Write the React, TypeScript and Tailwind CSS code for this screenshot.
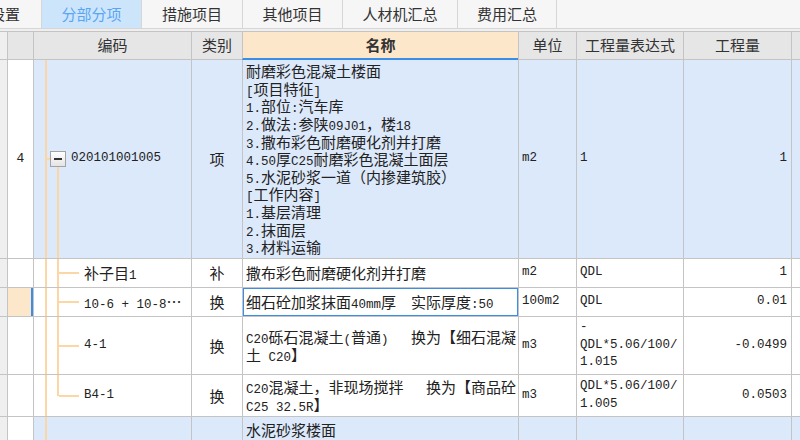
import React from 'react';

// Mixed CJK / half-width text: ASCII runs get the narrow mono font
function Mixed({ s }: { s: string }) {
  const parts = s.split(/([\x20-\x7e]+)/).filter((p) => p !== '');
  return (
    <>
      {parts.map((p, i) =>
        /^[\x20-\x7e]+$/.test(p) ? (
          <span key={i} className="font-['Liberation_Mono'] text-[12.5px] whitespace-pre">
            {p}
          </span>
        ) : (
          <span key={i} className="whitespace-pre">
            {p}
          </span>
        )
      )}
    </>
  );
}

function Line({ s }: { s: string }) {
  return (
    <div className="flex items-baseline h-[17.6px] leading-[17.6px]">
      <Mixed s={s} />
    </div>
  );
}

const tabs = [
  { label: '分部分项', w: 'w-[100px]', active: true },
  { label: '措施项目', w: 'w-[101px]', active: false },
  { label: '其他项目', w: 'w-[100px]', active: false },
  { label: '人材机汇总', w: 'w-[115px]', active: false },
  { label: '费用汇总', w: 'w-[99px]', active: false },
];

const GRID = 'grid grid-cols-[7px_26px_158px_51px_276px_58px_107px_108px_9px]';
const CELL = 'border-l border-b border-[#c4c4c4] flex items-center overflow-hidden';

type TreeKind = 'parent' | 'child' | 'last' | 'none';

function Tree({ kind }: { kind: TreeKind }) {
  return (
    <>
      <span className="absolute left-[11px] top-0 bottom-0 w-[2px] bg-[#fcd6a4]" />
      {kind === 'parent' && (
        <>
          <span className="absolute left-[12px] top-1/2 w-[5px] h-[2px] -translate-y-1/2 bg-[#fcd6a4]" />
          <span className="absolute left-[23px] top-[calc(50%+8px)] bottom-0 w-[2px] bg-[#fcd6a4]" />
          <span className="absolute left-[16px] top-1/2 -translate-y-1/2 w-[16px] h-[16px] border border-[#a3a3a3] bg-gradient-to-b from-white to-[#e4e4e4] flex items-center justify-center">
            <span className="w-[8px] h-[1.5px] bg-[#333]" />
          </span>
        </>
      )}
      {kind === 'child' && (
        <span className="absolute left-[23px] top-0 bottom-0 w-[2px] bg-[#fcd6a4]" />
      )}
      {kind === 'last' && (
        <span className="absolute left-[23px] top-0 h-1/2 w-[2px] bg-[#fcd6a4]" />
      )}
      {(kind === 'child' || kind === 'last') && (
        <span className="absolute left-[25px] top-1/2 w-[20px] h-[2px] -translate-y-1/2 bg-[#fcd6a4]" />
      )}
    </>
  );
}

interface RowProps {
  h: string;
  num?: string;
  code?: string;
  kind: TreeKind;
  type?: string;
  name: string[];
  unit?: string;
  expr?: string[];
  qty?: string;
  blue?: boolean;
  current?: boolean;
  alignTop?: boolean;
}

function Row({ h, num, code, kind, type, name, unit, expr, qty, blue, current, alignTop }: RowProps) {
  const bg = blue ? 'bg-[#dce9fb]' : 'bg-white';
  return (
    <div className={`${GRID} ${h} text-[15px] leading-[17.6px] text-[#222] font-['Noto_Sans_CJK_SC',sans-serif]`}>
      <div className="border-b border-[#c4c4c4] bg-[#efefef]" />
      <div className={`${CELL} relative justify-center ${current ? 'bg-[#fde7cb]' : 'bg-white'}`}>
        {num && <span className="font-['Liberation_Mono'] text-[13px]">{num}</span>}
        {current && <span className="absolute right-0 top-0 bottom-0 w-[2px] bg-[#3b8ee8]" />}
      </div>
      <div className={`${CELL} relative ${bg}`}>
        <Tree kind={kind} />
        {code && (
          <div className={kind === 'parent' ? 'ml-[37px]' : 'ml-[50px]'}>
            <Line s={code} />
          </div>
        )}
      </div>
      <div className={`${CELL} justify-center ${bg}`}>{type}</div>
      <div className={`${CELL} relative pl-[3px] ${bg} ${alignTop ? 'items-start pt-[4px]' : ''}`}>
        <div>
          {name.map((l, i) => (
            <Line key={i} s={l} />
          ))}
        </div>
        {current && (
          <span className="absolute -left-px -top-px -right-px -bottom-px border-2 border-[#3b8ee8]" />
        )}
      </div>
      <div className={`${CELL} pl-[3px] ${bg}`}>
        {unit && <span className="font-['Liberation_Mono'] text-[12.5px]">{unit}</span>}
      </div>
      <div className={`${CELL} pl-[3px] ${bg}`}>
        <div className="font-['Liberation_Mono'] text-[12.5px] whitespace-pre">
          {expr?.map((l, i) => (
            <div key={i} className="h-[17.6px] leading-[17.6px]">
              {l}
            </div>
          ))}
        </div>
      </div>
      <div className={`${CELL} justify-end pr-[4px] ${bg}`}>
        {qty && <span className="font-['Liberation_Mono'] text-[12.5px]">{qty}</span>}
      </div>
      <div className={`${CELL} ${bg}`} />
    </div>
  );
}

export default function App() {
  return (
    <div className="w-[800px] h-[440px] overflow-hidden bg-white font-['Noto_Sans_CJK_SC',sans-serif]">
      {/* Tabs */}
      <div className="flex h-[29px] bg-[#f6f6f6] border-b border-[#d6d6d6] text-[15px] text-[#333]">
        <div className="w-[42px] flex items-center justify-end pr-[21px] overflow-hidden border-r border-[#d6d6d6]">
          <span className="whitespace-nowrap">设置</span>
        </div>
        {tabs.map((t) => (
          <div
            key={t.label}
            className={`${t.w} flex items-center justify-center border-r border-[#d6d6d6] ${
              t.active ? 'bg-[#cde5fb] text-[#5aa5f3]' : ''
            }`}
          >
            {t.label}
          </div>
        ))}
      </div>
      <div className="h-[2px] bg-[#efefef]" />

      {/* Header */}
      <div className={`${GRID} h-[29px] text-[15px] text-[#333] border-t border-[#c4c4c4]`}>
        <div className="border-b border-[#c4c4c4] bg-[#efefef]" />
        <div className={`${CELL} bg-[#e6e6e6]`} />
        <div className={`${CELL} justify-center bg-[#e6e6e6]`}>编码</div>
        <div className={`${CELL} justify-center bg-[#e6e6e6]`}>类别</div>
        <div className="border-l border-b-2 border-l-[#c4c4c4] border-b-[#3b8ee8] flex items-center justify-center bg-[#fde7cb] font-bold">
          名称
        </div>
        <div className={`${CELL} justify-center bg-[#e6e6e6]`}>单位</div>
        <div className={`${CELL} justify-center bg-[#e6e6e6]`}>工程量表达式</div>
        <div className={`${CELL} justify-center bg-[#e6e6e6]`}>工程量</div>
        <div className={`${CELL} bg-[#e6e6e6]`} />
      </div>

      <Row
        h="h-[199px]"
        num="4"
        code="020101001005"
        kind="parent"
        type="项"
        blue
        name={[
          '耐磨彩色混凝土楼面',
          '[项目特征]',
          '1.部位:汽车库',
          '2.做法:参陕09J01，楼18',
          '3.撒布彩色耐磨硬化剂并打磨',
          '4.50厚C25耐磨彩色混凝土面层',
          '5.水泥砂浆一道（内掺建筑胶）',
          '[工作内容]',
          '1.基层清理',
          '2.抹面层',
          '3.材料运输',
        ]}
        unit="m2"
        expr={['1']}
        qty="1"
      />
      <Row
        h="h-[29px]"
        code="补子目1"
        kind="child"
        type="补"
        name={['撒布彩色耐磨硬化剂并打磨']}
        unit="m2"
        expr={['QDL']}
        qty="1"
      />
      <Row
        h="h-[29px]"
        code="10-6 + 10-8…"
        kind="child"
        type="换"
        current
        name={['细石砼加浆抹面40mm厚　实际厚度:50']}
        unit="100m2"
        expr={['QDL']}
        qty="0.01"
      />
      <Row
        h="h-[58px]"
        code="4-1"
        kind="child"
        type="换"
        name={['C20砾石混凝土(普通)   换为【细石混凝', '土 C20】']}
        unit="m3"
        expr={['-', 'QDL*5.06/100/', '1.015']}
        qty="-0.0499"
      />
      <Row
        h="h-[42px]"
        code="B4-1"
        kind="last"
        type="换"
        name={['C20混凝土，非现场搅拌   换为【商品砼', 'C25 32.5R】']}
        unit="m3"
        expr={['QDL*5.06/100/', '1.005']}
        qty="0.0503"
      />
      <Row
        h="h-[40px]"
        kind="none"
        blue
        alignTop
        name={['水泥砂浆楼面', '[项目特征]']}
      />
    </div>
  );
}
